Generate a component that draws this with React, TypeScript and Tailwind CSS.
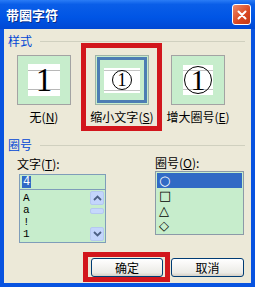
import React from "react";

const cjk = "font-['Noto_Sans_CJK_SC','Noto_Sans',sans-serif]";

// 预览框（样式选项）
const Preview: React.FC<{ kind: "none" | "small" | "big"; selected?: boolean }> = ({ kind, selected }) => {
	const inner =
		kind === "none" ? (
			<div className="relative w-[32px] h-[32px] bg-white flex items-center justify-center">
				<div className="absolute left-0 right-0 top-[6px] h-px bg-[#b8b8b8]" />
				<div className="absolute left-0 right-0 bottom-[6px] h-px bg-[#b8b8b8]" />
				<span className="relative font-['Liberation_Serif',serif] text-[33px] leading-none text-black">1</span>
			</div>
		) : kind === "small" ? (
			<div className="relative w-[36px] h-[25px] bg-white flex items-center justify-center">
				<div className="absolute left-0 right-0 top-[2px] h-px bg-[#c4c4c4]" />
				<div className="absolute left-0 right-0 bottom-[2px] h-px bg-[#c4c4c4]" />
				<div className="relative w-[20px] h-[20px] rounded-full border-[1.5px] border-black flex items-center justify-center">
					<span className="font-['Liberation_Serif',serif] text-[18px] leading-none text-black">1</span>
				</div>
			</div>
		) : (
			<div className="relative w-[30px] h-[30px] bg-white flex items-center justify-center">
				<div className="absolute left-0 right-0 top-[5px] h-px bg-[#c4c4c4]" />
				<div className="absolute left-0 right-0 bottom-[5px] h-px bg-[#c4c4c4]" />
				<div className="relative w-[28px] h-[28px] rounded-full border-[1.5px] border-black flex items-center justify-center">
					<span className="font-['Liberation_Serif',serif] text-[30px] leading-none text-black">1</span>
				</div>
			</div>
		);

	if (selected) {
		return (
			<div className="w-[54px] h-[50px] border border-[#9fb3a8] bg-[#C7EDCC] p-[1px]">
				<div className="w-full h-full border-[3px] border-[#4d7db3] flex items-center justify-center">{inner}</div>
			</div>
		);
	}
	return (
		<div className="w-[54px] h-[50px] border border-[#a3a3a3] bg-[#C7EDCC] flex items-center justify-center">
			{inner}
		</div>
	);
};

// 带下划线的快捷键
const Key: React.FC<{ k: string }> = ({ k }) => (
	<span>
		(<span className="underline">{k}</span>)
	</span>
);

const GroupTitle: React.FC<{ title: string }> = ({ title }) => (
	<div className="flex items-center h-[14px] pl-[4px] pr-[6px]">
		<span className="text-[12px] leading-none text-[#0046d5]">{title}</span>
		<div className="flex-1 ml-[8px] h-px bg-[#d0d0bf]" />
	</div>
);

const Chevron: React.FC<{ up?: boolean }> = ({ up }) => (
	<svg width="9" height="6" viewBox="0 0 9 6">
		<path d={up ? "M1 5 L4.5 1.5 L8 5" : "M1 1 L4.5 4.5 L8 1"} fill="none" stroke="#4d6185" strokeWidth="1.8" />
	</svg>
);

export default function App() {
	return (
		<div className={`relative w-[255px] h-[287px] flex flex-col bg-[#0853e0] ${cjk}`}>
			{/* 标题栏 */}
			<div className="h-[29px] flex items-center justify-between pl-[6px] pr-[4px] bg-[linear-gradient(180deg,#2a7cf6_0%,#0a5ee8_15%,#0055e5_60%,#0048d4_100%)]">
				<span className="text-white font-bold text-[13px] leading-none [text-shadow:1px_1px_0_#0a2e8a]">带圈字符</span>
				<button className="w-[19px] h-[21px] rounded-[3px] border border-white bg-[linear-gradient(135deg,#ef8a6a,#d9461f_60%,#c13a18)] flex items-center justify-center">
					<svg width="10" height="10" viewBox="0 0 10 10">
						<path d="M1.5 1.5 L8.5 8.5 M8.5 1.5 L1.5 8.5" stroke="white" strokeWidth="2" strokeLinecap="round" />
					</svg>
				</button>
			</div>

			{/* 主体 */}
			<div className="flex-1 mx-[4px] mb-[4px] bg-[#ECE9D8] flex flex-col text-black">
				<div className="mt-[5px]">
					<GroupTitle title="样式" />
				</div>

				{/* 样式选项 */}
				<div className="flex mt-[7px] text-[12px] leading-[14px]">
					<div className="ml-[12px] w-[56px] flex flex-col items-center">
						<Preview kind="none" />
						<div className="mt-[5px] whitespace-nowrap">
							无<Key k="N" />
						</div>
					</div>
					<div className="ml-[23px] w-[54px] flex flex-col items-center">
						<Preview kind="small" selected />
						<div className="mt-[5px] whitespace-nowrap">
							缩小文字<Key k="S" />
						</div>
					</div>
					<div className="ml-[22px] w-[54px] flex flex-col items-center">
						<Preview kind="big" />
						<div className="mt-[5px] whitespace-nowrap">
							增大圈号<Key k="E" />
						</div>
					</div>
				</div>

				<div className="mt-[14px]">
					<GroupTitle title="圈号" />
				</div>

				{/* 文字 / 圈号 */}
				<div className="flex mt-[5px] text-[12px] leading-[14px]">
					<div className="ml-[15px] w-[87px] flex flex-col">
						<div className="-ml-[2px]">
							文字<Key k="T" />:
						</div>
						<div className="mt-[3px] h-[16px] border border-[#7f9db9] bg-[#C7EDCC] flex items-center pl-[2px]">
							<span className="bg-[#316ac5] text-white px-[1px] h-[12px] leading-[12px] font-['Liberation_Mono',monospace] text-[12px]">4</span>
						</div>
						<div className="h-[53px] border border-t-0 border-[#7f9db9] bg-[#C7EDCC] flex">
							<div className="flex-1 pl-[3px] pt-[2px] font-['Liberation_Mono',monospace] text-[11px] leading-[12px]">
								<div className="h-[12px]">A</div>
								<div className="h-[12px]">a</div>
								<div className="h-[12px]">!</div>
								<div className="h-[12px]">1</div>
							</div>
							<div className="w-[15px] flex flex-col items-center py-[1px] pr-[1px]">
								<div className="w-[14px] h-[14px] rounded-[2px] border border-[#b5c8f0] bg-[#c3d5fc] flex items-center justify-center">
									<Chevron up />
								</div>
								<div className="mt-[3px] w-[14px] h-[6px] rounded-[2px] border border-[#b5c8f0] bg-[#c6d8fc]" />
								<div className="flex-1" />
								<div className="w-[14px] h-[14px] rounded-[2px] border border-[#b5c8f0] bg-[#c3d5fc] flex items-center justify-center">
									<Chevron />
								</div>
							</div>
						</div>
					</div>

					<div className="ml-[49px] w-[89px] flex flex-col">
						<div className="-mt-[1px]">
							圈号<Key k="O" />:
						</div>
						<div className="mt-[1px] h-[64px] border border-[#8c9aa8] bg-[#C7EDCC] p-[1px] flex flex-col font-['DejaVu_Sans',sans-serif] text-[13px] leading-[15px]">
							<div className="h-[15px] overflow-hidden bg-[#316ac5] text-white pl-[2px]">○</div>
							<div className="h-[15px] overflow-hidden pl-[2px]">□</div>
							<div className="h-[15px] overflow-hidden pl-[2px]">△</div>
							<div className="h-[15px] overflow-hidden pl-[2px]">◇</div>
						</div>
					</div>
				</div>

				{/* 按钮 */}
				<div className="mt-auto mb-[6px] flex justify-end gap-[8px] pr-[7px]">
					<button className="w-[72px] h-[19px] rounded-[3px] border border-[#003c74] bg-[linear-gradient(180deg,#ffffff,#ecebe6_80%,#d6d0c5)] text-[12px] leading-none">
						确定
					</button>
					<button className="w-[73px] h-[19px] rounded-[3px] border border-[#003c74] bg-[linear-gradient(180deg,#ffffff,#ecebe6_80%,#d6d0c5)] text-[12px] leading-none">
						取消
					</button>
				</div>
			</div>

			{/* 红色标注框 */}
			<div className="absolute left-[81px] top-[43px] w-[81px] h-[88px] border-[5px] border-[#d2161c] pointer-events-none" />
			<div className="absolute left-[83px] top-[252px] w-[87px] h-[30px] border-[5px] border-[#d2161c] pointer-events-none" />
		</div>
	);
}
